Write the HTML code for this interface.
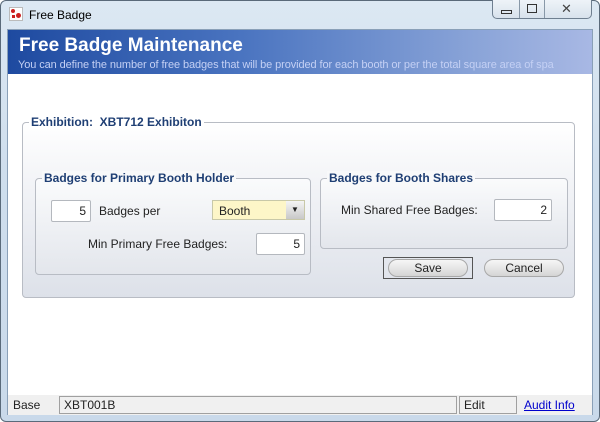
<!DOCTYPE html>
<html><head><style>
*{box-sizing:border-box;margin:0;padding:0}
body{width:600px;height:422px;overflow:hidden;font-family:"Liberation Sans",sans-serif;font-size:12px;color:#222;background:#fff;position:relative}
.frame{position:absolute;left:0;top:0;width:600px;height:422px;border:1px solid #5a6a7a;border-radius:6px;background:linear-gradient(180deg,#dce8f3,#cfdeed 40%,#c9d9ea)}
.abs{position:absolute}
.client{position:absolute;left:7px;top:29px;width:586px;height:386px;background:#fff;border:1px solid #8aa0b8}
.hdr{position:absolute;left:0;top:0;width:584px;height:44px;background:linear-gradient(90deg,#1e4aa0,#4a74c0 40%,#8aa4d8 80%,#a8b8e4)}
.grp{position:absolute;border:1px solid #b8bcc4;border-radius:4px}
.lg{position:absolute;font-weight:bold;color:#1f3f74;padding:0 2px;font-size:12px;line-height:14px}
.in{position:absolute;background:#fff;border:1px solid #b4b8be;border-radius:2px;text-align:right;padding-right:4px;line-height:20px;height:22px}
.btn{position:absolute;height:18px;border:1px solid #a8a8a8;border-radius:9px;background:linear-gradient(#f6f6f6,#e6e6e6 50%,#d4d4d4);text-align:center;line-height:16px}
</style></head><body>
<div class="frame"></div>
<div class="abs" style="left:9px;top:7px;width:14px;height:14px;background:#fff;border:1px solid #bbb"><div class="abs" style="left:1px;top:1px;width:4px;height:4px;border-radius:2px;background:#c22"></div><div class="abs" style="left:6px;top:5px;width:5px;height:5px;border-radius:3px;background:#c22"></div><div class="abs" style="left:2px;top:7px;width:3px;height:3px;background:#c22"></div></div>
<div class="abs" style="left:29px;top:8px;font-size:12px;color:#000">Free Badge</div>
<div class="abs" style="left:492px;top:0;width:100px;height:19px;border:1px solid #6f7f90;border-top:none;border-radius:0 0 5px 5px;background:linear-gradient(#eef3f8,#d8e2ec)">
<div class="abs" style="left:26px;top:0;width:1px;height:18px;background:#8898a8"></div>
<div class="abs" style="left:51px;top:0;width:1px;height:18px;background:#8898a8"></div>
<div class="abs" style="left:8px;top:10px;width:11px;height:4px;border:1px solid #333"></div>
<div class="abs" style="left:34px;top:4px;width:10px;height:9px;border:1px solid #333"></div>
<div class="abs" style="left:68px;top:1px;font-size:13px;color:#444">✕</div>
</div>
<div class="client">
<div class="hdr">
<div class="abs" style="left:11px;top:5px;color:#fff;font-weight:bold;font-size:19px">Free Badge Maintenance</div>
<div class="abs" style="left:10px;top:29px;color:#c4d0f4;font-size:11px;white-space:nowrap;letter-spacing:-0.1px">You can define the number of free badges that will be provided for each booth or per the total square area of spa</div>
</div>
<div class="grp" style="left:14px;top:92px;width:553px;height:176px;background:linear-gradient(#fff,#f4f5f8 30%,#dde1e9)"></div>
<div class="lg" style="left:21px;top:85px;background:#fff">Exhibition:&nbsp; XBT712 Exhibiton</div>
<div class="grp" style="left:27px;top:148px;width:276px;height:97px;background:linear-gradient(#fafbfc,#e3e6ec)"></div>
<div class="lg" style="left:34px;top:141px;background:#f8f9fa">Badges for Primary Booth Holder</div>
<div class="in" style="left:43px;top:170px;width:40px">5</div>
<div class="abs" style="left:91px;top:174px">Badges per</div>
<div class="abs" style="left:204px;top:170px;width:93px;height:20px;background:#fdf6c8;border:1px solid #c8c8a8"><span class="abs" style="left:6px;top:3px">Booth</span><div class="abs" style="right:0;top:0;width:18px;height:18px;background:linear-gradient(#f4f4f4,#c8c8c8);font-size:8px;text-align:center;line-height:18px">▼</div></div>
<div class="abs" style="left:80px;top:207px">Min Primary Free Badges:</div>
<div class="in" style="left:248px;top:203px;width:49px">5</div>
<div class="grp" style="left:312px;top:148px;width:248px;height:71px;background:linear-gradient(#fafbfc,#e3e6ec)"></div>
<div class="lg" style="left:319px;top:141px;background:#f8f9fa">Badges for Booth Shares</div>
<div class="abs" style="left:333px;top:173px">Min Shared Free Badges:</div>
<div class="in" style="left:486px;top:169px;width:58px">2</div>
<div class="abs" style="left:375px;top:227px;width:90px;height:22px;border:1px solid #555"></div>
<div class="btn" style="left:380px;top:229px;width:80px">Save</div>
<div class="btn" style="left:476px;top:229px;width:80px">Cancel</div>
<div class="abs" style="left:0;top:365px;width:584px;height:20px;background:#f0f0f0">
<div class="abs" style="left:5px;top:3px">Base</div>
<div class="abs" style="left:51px;top:1px;width:398px;height:18px;border:1px solid #a0a0a0;padding-left:4px;line-height:16px">XBT001B</div>
<div class="abs" style="left:451px;top:1px;width:58px;height:18px;border:1px solid #a0a0a0;padding-left:4px;line-height:16px">Edit</div>
<div class="abs" style="left:516px;top:3px;color:#00c;text-decoration:underline">Audit Info</div>
</div>
</div>
</body></html>
